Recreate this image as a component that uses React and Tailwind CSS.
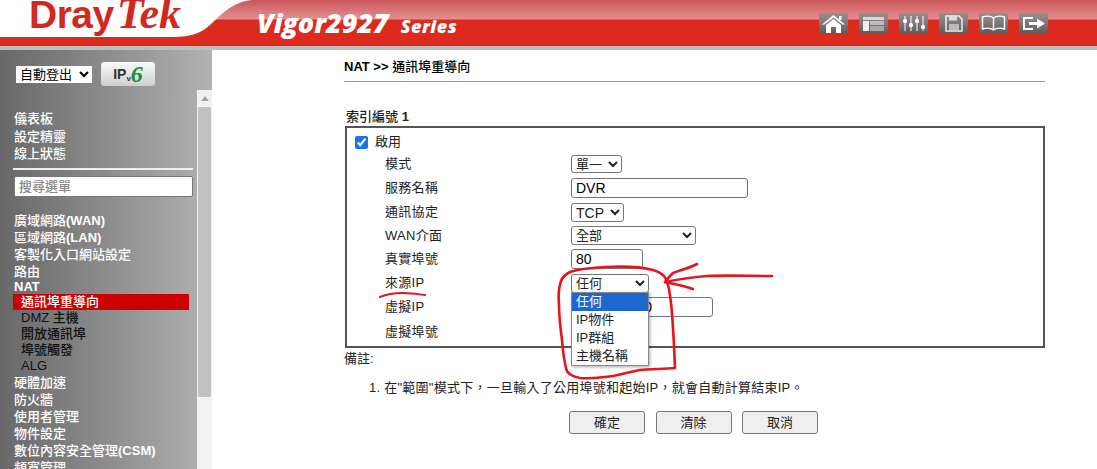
import React from "react";

const cjk = "font-['Liberation_Sans','Noto_Sans_CJK_TC',sans-serif]";

const topNav = ["儀表板", "設定精靈", "線上狀態"];
const wanNav = [
  <>廣域網路<b>(WAN)</b></>,
  <>區域網路<b>(LAN)</b></>,
  "客製化入口網站設定",
  "路由",
];
const natNav = ["DMZ 主機", "開放通訊埠", "埠號觸發", "ALG"];
const lowerNav = [
  "硬體加速",
  "防火牆",
  "使用者管理",
  "物件設定",
  <>數位內容安全管理<b>(CSM)</b></>,
  "頻寬管理",
];

function HeaderIcon({ children }) {
  return (
    <div className="w-[29px] h-[21px] rounded-[2px] bg-gradient-to-b from-[#9a8f8f] via-[#7d7878] via-50% to-[#5a5a5a] flex items-center justify-center">
      <svg width="27" height="19" viewBox="0 0 27 19">
        {children}
      </svg>
    </div>
  );
}

function HeaderIcons() {
  return (
    <div className="flex gap-[11px]">
      <HeaderIcon>
        <path d="M13.5 1 L25 10.5 L22.5 10.5 L13.5 3.5 L4.5 10.5 L2 10.5 Z" fill="#fff" />
        <path d="M6 11 L13.5 5 L21 11 V19 H16 V13 H11 V19 H6 Z" fill="#fff" />
        <rect x="19" y="2" width="2.5" height="4" fill="#fff" />
      </HeaderIcon>
      <HeaderIcon>
        <rect x="3" y="3" width="21" height="3" fill="#d8d8d8" />
        <rect x="3" y="7" width="6" height="10" fill="#eee" />
        <rect x="10" y="7" width="14" height="4" fill="#bdbdbd" />
        <rect x="10" y="12" width="14" height="5" fill="#a8a8a8" />
      </HeaderIcon>
      <HeaderIcon>
        <path d="M5 2 V17 M11 2 V17 M17 2 V17 M23 2 V17" stroke="#fff" strokeWidth="1" />
        <rect x="3" y="5" width="4" height="4" rx="1.5" fill="#fff" />
        <rect x="9" y="9" width="4" height="4" rx="1.5" fill="#fff" />
        <rect x="15" y="5" width="4" height="4" rx="1.5" fill="#fff" />
        <rect x="21" y="11" width="4" height="4" rx="1.5" fill="#fff" />
      </HeaderIcon>
      <HeaderIcon>
        <path d="M6 2 H19 L22 5 V17 H6 Z" fill="none" stroke="#eee" strokeWidth="1.5" />
        <rect x="9" y="2.5" width="8" height="4" fill="#ddd" />
        <rect x="9" y="10" width="10" height="6" fill="#bbb" />
      </HeaderIcon>
      <HeaderIcon>
        <path d="M13.5 4 C11 2 6 2 2.5 3 V15 C6 14 11 14 13.5 16 C16 14 21 14 24.5 15 V3 C21 2 16 2 13.5 4 Z M13.5 4 V16" fill="none" stroke="#fff" strokeWidth="1.4" />
      </HeaderIcon>
      <HeaderIcon>
        <path d="M13 4 H4 V15 H13" fill="none" stroke="#fff" strokeWidth="2" />
        <path d="M9 8 H17 V4.5 L25 9.5 L17 14.5 V11 H9 Z" fill="#fff" />
      </HeaderIcon>
    </div>
  );
}

function Header() {
  return (
    <header className="relative h-[50px] overflow-hidden bg-[linear-gradient(to_bottom,#c9565a_0px,#e58f90_19px,#dc2a1f_20px,#dc2a1f_100%)] border-b-[4px] border-[#c2bcbc] flex items-center">
      <svg className="absolute left-0 top-0" width="300" height="46" viewBox="0 0 300 46">
        <path d="M0 0 H252 C232 2 222 14 210 25 C201 33 192 37 172 37 H0 Z" fill="#fff" />
      </svg>
      <div className="absolute left-[29px] top-[-12px] flex items-baseline">
        <span className="font-['Liberation_Sans',sans-serif] font-bold text-[39px] leading-[52px] tracking-[-0.5px] text-[#d3281f]">Dray</span>
        <span className="font-['Liberation_Serif',serif] italic font-bold text-[44px] leading-[52px] ml-[3px] text-[#d3281f]">Tek</span>
      </div>
      <div className="ml-[257px] mt-[-1px] flex items-baseline gap-[12px] text-white italic font-extrabold font-['Open_Sans',sans-serif] relative">
        <span className="text-[27px] leading-none">Vigor2927</span>
        <span className="text-[18px] leading-none tracking-[0.5px]">Series</span>
      </div>
      <div className="absolute right-[49px] top-[13px]">
        <HeaderIcons />
      </div>
    </header>
  );
}

function Sidebar() {
  return (
    <aside className={`w-[212px] h-[419px] shrink-0 overflow-hidden relative ${cjk}`}>
      <div className="h-[40px] bg-gradient-to-r from-[#686868] to-[#b2b2b2] flex items-center gap-[9px] pl-[16px] pt-[8px]">
        <select className="w-[76px] h-[17px] bg-white text-[13px] text-black">
          <option>自動登出</option>
        </select>
        <div className="w-[54px] h-[24px] rounded-[3px] bg-gradient-to-b from-[#fafafa] to-[#cfcfcf] flex items-center justify-center font-bold text-[#333] text-[14px] leading-none">
          IP<span className="text-[8px] self-end mb-[3px]">v</span>
          <span className="text-[24px] italic text-[#148f40] font-['Liberation_Serif',serif]">6</span>
        </div>
      </div>
      <div className="flex h-[379px]">
        <div className="w-[197px] bg-gradient-to-r from-[#686868] to-[#adadad] pl-[14px] pr-[4px] pt-[20px] text-[13px] leading-[17.5px] text-white font-medium">
          {topNav.map((n) => (
            <div key={n}>{n}</div>
          ))}
          <div className="h-[2px] bg-[#eeeeee] mt-[5px] mb-[6px] -ml-px" />
          <input
            className="w-[179px] h-[21px] bg-white border border-[#777] rounded-[2px] px-1 text-[13px] placeholder:text-[#888]"
            placeholder="搜尋選單"
          />
          <div className="mt-[15px] leading-[17px]">
            {wanNav.map((n, i) => (
              <div key={i}>{n}</div>
            ))}
            <div className="font-bold leading-[14px]">NAT</div>
          </div>
          <div className="w-[176px] h-[16px] leading-[16px] bg-[#cc0000] pl-2 -ml-px">通訊埠重導向</div>
          {natNav.map((n) => (
            <div key={n} className="pl-[7px] leading-[16px] text-[#111]">
              {n}
            </div>
          ))}
          {lowerNav.map((n, i) => (
            <div key={i} className="leading-[17px]">{n}</div>
          ))}
        </div>
        <div className="w-[15px] bg-[#f1f1f1] flex flex-col">
          <div className="h-[17px] flex items-center justify-center">
            <div className="w-0 h-0 border-x-[4px] border-x-transparent border-b-[5px] border-b-[#a3a3a3]" />
          </div>
          <div className="w-[13px] mx-auto h-[290px] bg-[#c1c1c1]" />
        </div>
      </div>
    </aside>
  );
}

function Row({ label, children, className = "" }) {
  return (
    <div className={`flex items-center ${className}`}>
      <div className="w-[186px] text-[13px] tracking-[0.3px] text-[#222]">{label}</div>
      {children}
    </div>
  );
}

const controlBox = "border border-[#767676] rounded-[3px] bg-white text-black text-[14px] h-[20px] px-1";

function NatForm() {
  return (
    <div className="relative w-[700px] h-[222px] border-2 border-[#555] pl-[8px] pt-[5px] ml-[1px]">
      <label className="flex items-center h-[18px] text-[13px] text-[#222] gap-[7px]">
        <input type="checkbox" defaultChecked className="w-[13px] h-[13px] accent-[#1a73e8]" />
        啟用
      </label>
      <div className="pl-[30px] flex flex-col">
        <Row label="模式" className="h-[24px] mt-px">
          <select className="w-[51px] h-[18px] border border-[#767676] rounded-[3px] bg-white text-[13px]">
            <option>單一</option>
          </select>
        </Row>
        <Row label="服務名稱" className="h-[24px]">
          <input className={`${controlBox} w-[177px]`} defaultValue="DVR" />
        </Row>
        <Row label="通訊協定" className="h-[24px]">
          <select className="w-[53px] h-[19px] border border-[#767676] rounded-[3px] bg-white text-[14px]">
            <option>TCP</option>
          </select>
        </Row>
        <Row label="WAN介面" className="h-[23px]">
          <select className="w-[125px] h-[19px] border border-[#767676] rounded-[3px] bg-white text-[13px]">
            <option>全部</option>
          </select>
        </Row>
        <Row label="真實埠號" className="h-[24px]">
          <input className={`${controlBox} w-[72px]`} defaultValue="80" />
        </Row>
        <Row label="來源IP" className="h-[24px]">
          <select className="w-[78px] h-[19px] border border-[#767676] rounded-[3px] bg-white text-[13px]">
            <option>任何</option>
          </select>
        </Row>
        <Row label="虛擬IP" className="h-[24px]">
          <input className="border border-[#767676] rounded-[3px] bg-white text-black text-[14px] h-[20px] pl-[6px] w-[142px]" defaultValue="192.168.1.0" />
        </Row>
        <Row label="虛擬埠號" className="h-[25px]">
          <span />
        </Row>
      </div>
      <div className="absolute left-[224px] top-[164px] w-[78px] border border-[#8a8a8a] bg-white shadow-[1px_1px_3px_rgba(0,0,0,0.35)] text-[13px] leading-[18px] text-[#222]">
        <div className="bg-[#1d68d0] text-white pl-1">任何</div>
        <div className="pl-1">IP物件</div>
        <div className="pl-1">IP群組</div>
        <div className="pl-1">主機名稱</div>
      </div>
    </div>
  );
}

function Annotations() {
  return (
    <svg className="absolute left-0 top-0 pointer-events-none" width="1097" height="469" viewBox="0 0 1097 469" fill="none" stroke="#e8141c" strokeLinecap="round" strokeLinejoin="round">
      <path d="M380 297 C387 294 394 293 402 293 C410 293 418 294 425 295" strokeWidth="2.2" />
      <path d="M570 272 C578 269 590 268 605 267 C625 266 642 267 653 270 C660 272 664 275 666 279 C669 286 670 293 671 303 C673 320 674 345 675 368 C662 369 650 369 640 370 C628 372 618 376 605 377 C595 378 587 379 580 378 C572 376 567 374 566 368 C564 360 563 352 562 340 C560 325 559 315 559 305 C558 295 559 287 561 281 C563 276 566 274 570 272 Z" strokeWidth="2.6" />
      <path d="M697 264 C690 268 680 270 673 273 C670 276 667 279 665 282 C675 284 685 286 693 289" strokeWidth="2.6" />
      <path d="M665 282 C680 279 693 277 707 276 C730 275 750 276 772 276" strokeWidth="2.6" />
    </svg>
  );
}

function Main() {
  return (
    <main className={`flex-1 pl-[132px] pr-[53px] text-[#222] ${cjk}`}>
      <h1 className="h-[32px] leading-[34px] text-[13px] font-medium text-black border-b border-[#999]">
        <b>NAT &gt;&gt;</b> 通訊埠重導向
      </h1>
      <div className="mt-[25px] h-[19px] pl-[2px] text-[13px] font-medium text-[#222]">
        索引編號 <b>1</b>
      </div>
      <NatForm />
      <div className="text-[13px] mt-[2px] leading-[18px]">備註:</div>
      <div className="pl-[25px] mt-[11px] text-[13px] leading-[18px] tracking-[0.25px]">
        1. 在"範圍"模式下，一旦輸入了公用埠號和起始IP，就會自動計算結束IP。
      </div>
      <div className="flex gap-[10.5px] pl-[225px] mt-[14px]">
        {["確定", "清除", "取消"].map((b) => (
          <button key={b} className="w-[76px] h-[23px] border border-[#767676] rounded-[3px] bg-[#efefef] text-[13px] text-[#222]">
            {b}
          </button>
        ))}
      </div>
    </main>
  );
}

export default function App() {
  return (
    <div className="relative w-[1097px] h-[469px] overflow-hidden bg-white">
      <Header />
      <div className="flex">
        <Sidebar />
        <Main />
      </div>
      <Annotations />
    </div>
  );
}
